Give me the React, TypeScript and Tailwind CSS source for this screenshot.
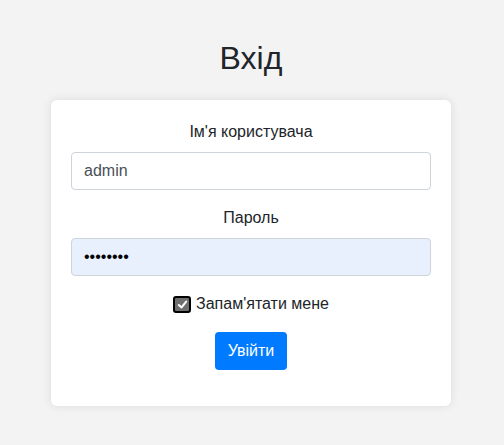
import React from "react";

export default function App() {
  return (
    <div className="min-h-[445px] w-full bg-[#f3f3f3] text-[#212529] [font-family:'Liberation_Sans',Arial,sans-serif]">
      <div className="flex w-[502px] flex-col items-center pt-[39px]">
        <h2 className="mb-[23px] text-[32px] leading-[38.4px] font-normal">Вхід</h2>
        <div className="w-[400px] rounded-[6px] bg-white p-5 shadow-[0_0_10px_rgba(0,0,0,0.1)]">
          <div className="mb-4 flex flex-col">
            <label className="mb-2 text-center text-[16px] leading-6">Ім'я користувача</label>
            <div className="flex h-[38px] items-center rounded-[4px] border border-[#ced4da] bg-white px-3 text-[16px] text-[#495057]">
              admin
            </div>
          </div>
          <div className="mb-4 flex flex-col">
            <label className="mb-2 text-center text-[16px] leading-6">Пароль</label>
            <div className="flex h-[38px] items-center rounded-[4px] border border-[#ced4da] bg-[#e8f0fe] px-3 text-[16px] text-black">
              ••••••••
            </div>
          </div>
          <div className="mb-4 flex h-6 items-center justify-center gap-[5px]">
            <span className="flex h-[17px] w-[18px] items-center justify-center rounded-[3px] border-2 border-black bg-[#6f6f6f]">
              <svg width="11" height="11" viewBox="0 0 12 12">
                <path d="M2 6.5 L5 9.2 L10 2.8" fill="none" stroke="white" strokeWidth="2.2" strokeLinecap="round" strokeLinejoin="round" />
              </svg>
            </span>
            <span className="text-[16px] leading-6">Запам'ятати мене</span>
          </div>
          <div className="mb-4 flex justify-center">
            <button className="h-[38px] rounded-[4px] bg-[#007bff] px-[13px] text-[16px] text-white">Увійти</button>
          </div>
        </div>
      </div>
    </div>
  );
}
